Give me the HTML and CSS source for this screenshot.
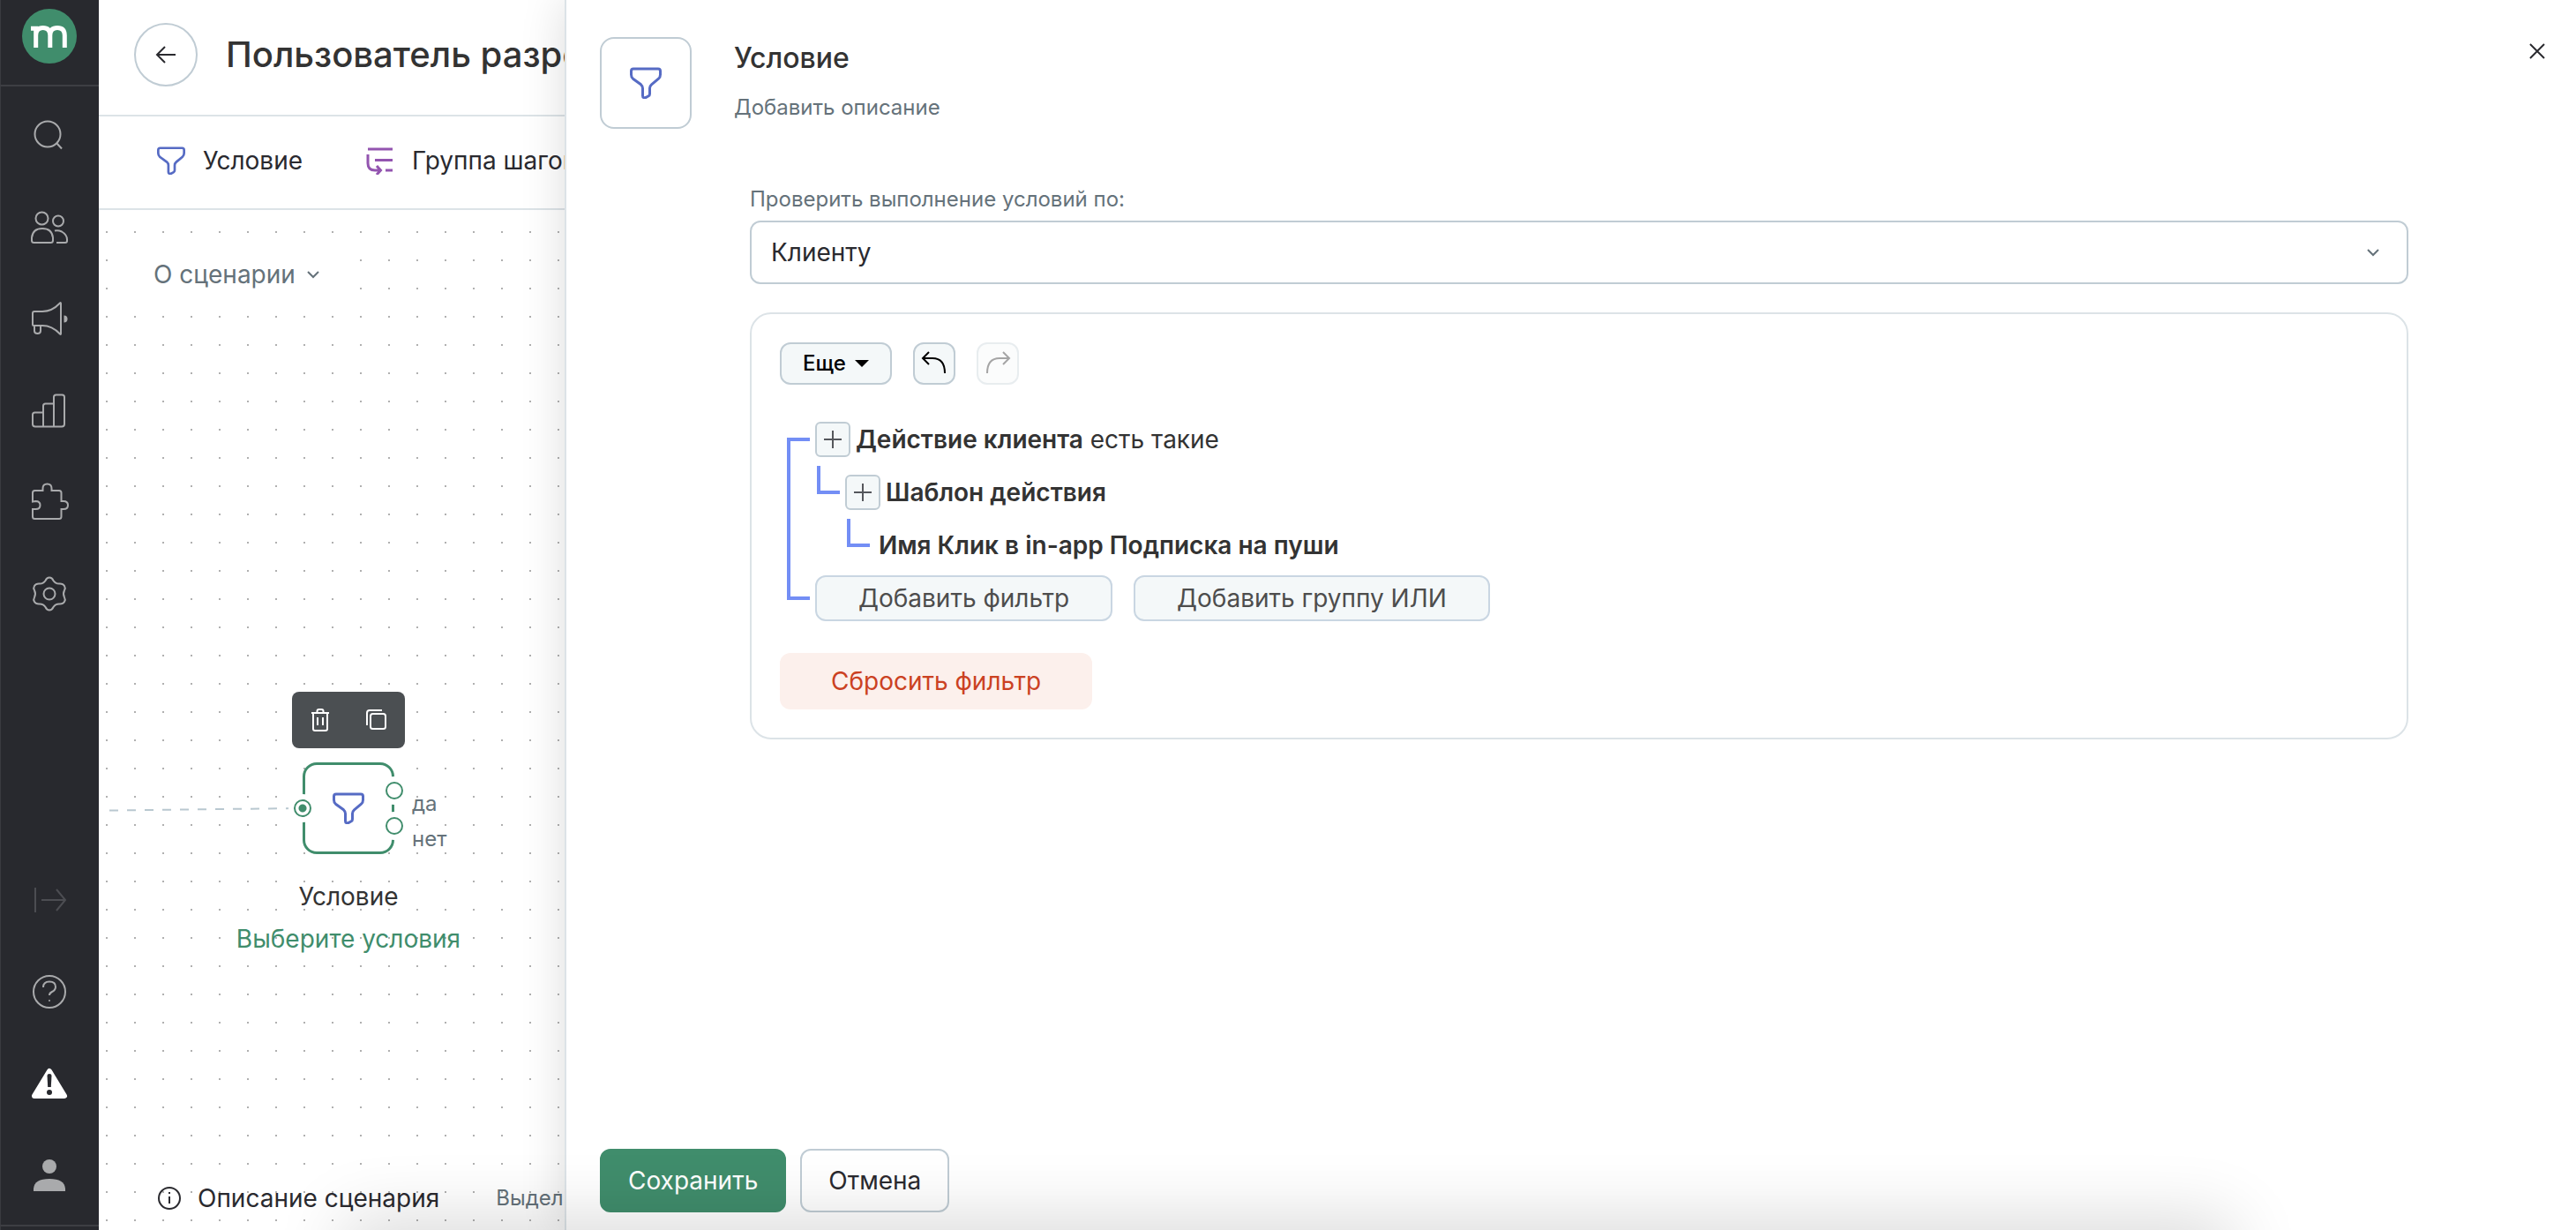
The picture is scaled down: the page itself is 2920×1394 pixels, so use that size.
FILE: index.html
```html
<!DOCTYPE html>
<html lang="ru">

<head>
    <meta charset="utf-8">
    <title>Условие</title>
    <link rel="stylesheet" href="styles.css">
</head>

<body>
    <!-- shared icon -->
    <svg class="sprite" aria-hidden="true">
        <symbol id="funnel" viewBox="0 0 36 36">
            <path d="M4 2H32Q34.500 2 34.500 4.500V8.500Q34.500 11.500 32.500 13.200L24.500 19.800Q22.500 21.500 22.500 24V30.500Q22.500 32 21.200 32.800L18 34.500Q14.500 35.500 14.500 32.500V24Q14.500 21.500 12.500 19.800L3.500 13.200Q1.500 11.500 1.500 8.500V4.500Q1.500 2 4 2Z" />
        </symbol>
    </svg>

    <nav class="sidebar">
        <a href="#" class="logo" aria-label="Главная">
            <svg width="62" height="62" viewBox="0 0 62 62">
                <circle cx="31" cy="31" r="31" fill="#408d6c" />
                <path d="M10 22.300h5.700V44M15.700 30q0-8.500 8-8.500t8.100 8.500v14M31.800 30q0-8.500 8.200-8.500t8.300 8.500v14" fill="none" stroke="#fff" stroke-width="5" />
            </svg>
        </a>
        <div class="nav-group">
            <a href="#" class="nav-item" aria-label="Поиск">
                <svg width="44" height="44" viewBox="0 0 44 44"><circle cx="20" cy="21" r="14.500" /><path d="M30 31l6 6.500" /></svg>
            </a>
            <a href="#" class="nav-item" aria-label="Клиенты">
                <svg width="44" height="44" viewBox="0 0 44 44"><circle cx="13.500" cy="12.500" r="7" /><circle cx="32" cy="15.500" r="6" /><path d="M4.500 40q-2.500 0-2.500-2.500v-3Q3 24 14 24t12 10.500v3q0 2.500-2.500 2.500zM28 26.500q4-1 8 1 6 3.500 6 9v1.500q0 2-2 2h-10" /></svg>
            </a>
            <a href="#" class="nav-item" aria-label="Кампании">
                <svg width="44" height="44" viewBox="0 0 44 44"><path d="M4 30q-1 0-1-1V16q0-2 2-2h9q11 0 20-9.500 1-1 1 .5v34q0 1.500-1 .500Q25 30 14 30zM5 30v6q0 3 3.500 3t3.500-3v-6" /><path d="M38.500 18.500q4 0 4 4t-4 4z" class="solid" /></svg>
            </a>
            <a href="#" class="nav-item" aria-label="Отчеты">
                <svg width="44" height="44" viewBox="0 0 44 44"><path d="M6 40.500q-3 0-3-3V27q0-2.500 2.500-2.500H15V17q0-2.500 2.500-2.500H27V7q0-2.500 2.500-2.500h7Q39 4.500 39 7v30.500q0 3-3 3zM15 24v16M27 14v26" /></svg>
            </a>
            <a href="#" class="nav-item" aria-label="Интеграции">
                <svg width="44" height="44" viewBox="0 0 44 44"><path d="M3 21.500V11.500q0-2.500 2.500-2.500H14.500V6.500q0-5 5-5t5 5V9H33q2.500 0 2.500 2.500v9.500h2.500q5 0 5 4.500t-5 4.500h-2.500v8.500q0 2.500-2.500 2.500H5.500Q3 41 3 38.500V30h3.500q5 0 5-4.500T6.500 21z" /></svg>
            </a>
            <a href="#" class="nav-item" aria-label="Настройки">
                <svg width="44" height="44" viewBox="0 0 44 44"><circle cx="22" cy="22" r="6.500" /><path d="M17.500 7Q19 3.500 22 3.500T26.500 7Q29 11 34 10.500 37.500 10.500 39 13T39 18Q37 22 39 26 40.500 28.500 39 31T34 33.500Q29 33 26.500 37 25 40.500 22 40.500T17.500 37Q15 33 10 33.500 6.500 33.500 5 31T5 26Q7 22 5 18 3.500 15.500 5 13T10 10.500Q15 11 17.500 7Z" /></svg>
            </a>
        </div>
        <div class="nav-group nav-bottom">
            <a href="#" class="nav-item dim" aria-label="Развернуть">
                <svg width="44" height="44" viewBox="0 0 44 44"><path d="M6 8v28M13 22h27M30 10l10 12-10 12" /></svg>
            </a>
            <a href="#" class="nav-item" aria-label="Помощь">
                <svg width="44" height="44" viewBox="0 0 44 44"><circle cx="22" cy="22" r="18" /><path d="M15 17q0-6.500 7-6.500t7 6q0 3.500-4 5.500-3 1.500-3 4" /><circle cx="22" cy="32" r="1" class="solid" /></svg>
            </a>
            <a href="#" class="nav-item" aria-label="Предупреждения">
                <svg width="44" height="44" viewBox="0 0 44 44"><path d="M22 8L39 36H5z" fill="#fff" stroke="#fff" stroke-width="6" stroke-linejoin="round" /><path d="M19.500 13q0-2 2.500-2t2.500 2l-.7 13h-3.600z" fill="#28292e" stroke="none" /><circle cx="22" cy="32" r="3" fill="#28292e" stroke="none" /></svg>
            </a>
            <a href="#" class="nav-item" aria-label="Профиль">
                <svg width="44" height="44" viewBox="0 0 44 44"><circle cx="22" cy="12" r="8" class="solid" /><path d="M4 40v-3Q5 26 22 26t18 11v3z" class="solid" /></svg>
            </a>
        </div>
    </nav>

    <main class="editor">
        <header class="editor-header">
            <button class="back" aria-label="Назад">
                <svg width="24" height="24" viewBox="0 0 24 24"><path d="M23 12H2M11 3L2 12l9 9" /></svg>
            </button>
            <h1>Пользователь разре</h1>
        </header>
        <div class="steps">
            <button class="step">
                <svg class="funnel" width="32" height="32"><use href="#funnel" /></svg>
                Условие
            </button>
            <button class="step">
                <svg class="group-icon" width="32" height="32" viewBox="0 0 32 32"><path d="M2 3h28M10 15.500h20M2 9v10q0 8 8 8h5M12 22l4.500 5-4.500 5M22 27h8" /></svg>
                Группа шагов
            </button>
        </div>

        <div class="canvas">
            <button class="about">
                О сценарии
                <svg width="16" height="16" viewBox="0 0 16 16"><path d="M2 5l6 6 6-6" /></svg>
            </button>

            <svg class="link" width="220" height="6" viewBox="0 0 220 6"><path d="M0 4.500L215 2" /></svg>

            <div class="node">
                <div class="node-tools">
                    <button aria-label="Удалить">
                        <svg width="28" height="28" viewBox="0 0 28 28"><path d="M4 6h20M6 6v18q0 2 2 2h12q2 0 2-2V6M10.500 6V4q0-2 2-2h3q2 0 2 2v2M11 11v9M17 11v9" /></svg>
                    </button>
                    <button aria-label="Копировать">
                        <svg width="28" height="28" viewBox="0 0 28 28"><path d="M3 20V6q0-3 3-3h14" /><rect x="7" y="7" width="17" height="17" rx="2.500" /></svg>
                    </button>
                </div>
                <div class="node-box">
                    <svg class="funnel" width="36" height="36"><use href="#funnel" /></svg>
                    <span class="port port-in"></span>
                    <span class="port port-yes"></span>
                    <span class="port port-no"></span>
                    <div class="port-labels"><span>да</span><span>нет</span></div>
                </div>
                <div class="node-name">Условие</div>
                <a href="#" class="node-hint">Выберите условия</a>
            </div>

            <footer class="canvas-footer">
                <button class="describe">
                    <svg width="28" height="28" viewBox="0 0 28 28"><circle cx="14" cy="14" r="12" /><path d="M14 12v8M14 7v2" /></svg>
                    Описание сценария
                </button>
                <span class="select-hint">Выдел</span>
            </footer>
        </div>
    </main>

    <section class="panel">
        <header class="panel-header">
            <div class="panel-icon">
                <svg class="funnel" width="36" height="36"><use href="#funnel" /></svg>
            </div>
            <div class="panel-title">
                <h2>Условие</h2>
                <a href="#">Добавить описание</a>
            </div>
            <button class="close" aria-label="Закрыть">
                <svg width="20" height="20" viewBox="0 0 20 20"><path d="M2 2l16 16M18 2L2 18" /></svg>
            </button>
        </header>

        <div class="panel-body">
            <label for="target">Проверить выполнение условий по:</label>
            <div class="select-wrap">
                <select id="target">
                    <option>Клиенту</option>
                </select>
                <svg width="16" height="16" viewBox="0 0 16 16"><path d="M2 5l6 6 6-6" /></svg>
            </div>

            <div class="filter-card">
                <div class="filter-bar">
                    <button class="tool more">Еще <span class="caret"></span></button>
                    <button class="tool" aria-label="Отменить">
                        <svg width="32" height="32" viewBox="0 0 32 32"><path d="M10 3L3 10l7 7M3 10h11q14 0 14 17" /></svg>
                    </button>
                    <button class="tool" aria-label="Повторить" disabled>
                        <svg width="32" height="32" viewBox="0 0 32 32"><path d="M22 3l7 7-7 7M29 10H18Q4 10 4 27" /></svg>
                    </button>
                </div>

                <div class="tree">
                    <div class="tree-row">
                        <button class="plus" aria-label="Добавить"><svg width="20" height="20" viewBox="0 0 20 20"><path d="M10 0v20M0 10h20" /></svg></button>
                        <span><b>Действие клиента</b> есть такие</span>
                    </div>
                    <div class="tree-row level-1">
                        <button class="plus" aria-label="Добавить"><svg width="20" height="20" viewBox="0 0 20 20"><path d="M10 0v20M0 10h20" /></svg></button>
                        <b>Шаблон действия</b>
                    </div>
                    <div class="tree-row level-2">
                        <b>Имя Клик в in-app Подписка на пуши</b>
                    </div>
                    <div class="tree-row tree-actions">
                        <button class="add">Добавить фильтр</button>
                        <button class="add">Добавить группу ИЛИ</button>
                    </div>
                </div>

                <button class="reset">Сбросить фильтр</button>
            </div>
        </div>

        <footer class="panel-footer">
            <button class="btn btn-primary">Сохранить</button>
            <button class="btn">Отмена</button>
        </footer>
    </section>
</body>

</html>
```
FILE: styles.css
```css
*,
*::before,
*::after {
    box-sizing: border-box;
}

body {
    margin: 0;
    height: 100vh;
    display: flex;
    overflow: hidden;
    font-family: Inter, sans-serif;
    font-size: 28px;
    line-height: 36px;
    color: #2a2a2f;
    background: #fff;
}

/* soft shade along the bottom edge of the window */
body::after {
    content: "";
    position: fixed;
    left: 400px;
    right: 400px;
    bottom: -60px;
    height: 60px;
    box-shadow: 0 0 80px 10px rgba(0, 0, 0, 0.16);
    pointer-events: none;
    z-index: 3;
}

button,
select {
    font: inherit;
    color: inherit;
    cursor: pointer;
}

button {
    background: none;
    border: none;
    padding: 0;
    display: flex;
    align-items: center;
    justify-content: center;
    white-space: nowrap;
}

a {
    text-decoration: none;
}

svg {
    display: block;
    flex: none;
    fill: none;
    stroke: currentColor;
    stroke-width: 2;
}

.sprite {
    position: absolute;
    width: 0;
    height: 0;
}

.funnel {
    color: #566bc4;
    stroke-width: 3;
}

/* sidebar */
.sidebar {
    flex: none;
    width: 112px;
    display: flex;
    flex-direction: column;
    background: #28292e;
    box-shadow: inset 1px 0 #3a3b40;
    position: relative;
    z-index: 4;
}

.logo {
    height: 98px;
    padding-top: 10px;
    display: flex;
    justify-content: center;
    border-bottom: 2px solid #3d3e43;
}

.logo svg {
    stroke: none;
}

.nav-group {
    padding-top: 3px;
}

.nav-bottom {
    margin-top: auto;
    padding: 0 0 4px;
    margin-bottom: 4px;
    border-bottom: 2px solid #3d3e43;
}

.nav-item {
    height: 104px;
    display: flex;
    align-items: center;
    justify-content: center;
    color: #a9aaac;
}

.nav-item.dim {
    color: #4c4d52;
}

.solid {
    fill: currentColor;
    stroke: none;
}

/* scenario editor */
.editor {
    flex: none;
    width: 528px;
    display: flex;
    flex-direction: column;
    overflow: hidden;
}

.editor-header {
    height: 132px;
    padding: 0 0 6px 40px;
    display: flex;
    align-items: center;
    gap: 32px;
    border-bottom: 2px solid #dce3e7;
}

.back {
    flex: none;
    width: 72px;
    height: 72px;
    border: 2px solid #c0ccd4;
    border-radius: 50%;
}

h1 {
    margin: 0;
    font-size: 40px;
    line-height: 48px;
    font-weight: 500;
    color: #333;
    white-space: nowrap;
}

.steps {
    height: 106px;
    padding: 0 0 4px 66px;
    display: flex;
    align-items: center;
    gap: 72px;
    border-bottom: 2px solid #dce3e7;
}

.step {
    gap: 20px;
}

.group-icon {
    color: #9355b0;
    stroke-width: 3;
}

.canvas {
    flex: 1;
    position: relative;
    display: flex;
    flex-direction: column;
    justify-content: space-between;
    align-items: flex-start;
    background: conic-gradient(from 270deg at 2px 2px, #b0b0b0 90deg, transparent 0) 8px 24px / 32px 32px;
}

.about {
    margin: 40px 0 0 32px;
    padding: 15px 30px;
    gap: 12px;
    color: #65727a;
    background: #fff;
}

.link {
    position: absolute;
    left: 12px;
    top: 676px;
    color: #b9c8d0;
    stroke-dasharray: 10 10;
}

.node {
    position: absolute;
    left: 123px;
    top: 546px;
    width: 320px;
    display: flex;
    flex-direction: column;
    align-items: center;
}

.node-tools {
    width: 128px;
    height: 64px;
    display: flex;
    justify-content: space-around;
    color: #fff;
    background: #4b4f52;
    border-radius: 8px;
}

.node-box {
    position: relative;
    width: 104px;
    height: 104px;
    margin: 16px 0 30px;
    display: flex;
    align-items: center;
    justify-content: center;
    background: #fff;
    border: 3px solid #408d6c;
    border-radius: 16px;
}

/* the white ring cuts a gap in the border around each port */
.port {
    position: absolute;
    width: 20px;
    height: 20px;
    border: 2px solid #408d6c;
    border-radius: 50%;
    background: #fff;
    box-shadow: 0 0 0 6px #fff;
}

.port-in {
    left: -13px;
    top: 39px;
    background: radial-gradient(circle, #408d6c 4px, #fff 5px);
}

.port-yes {
    right: -13px;
    top: 19px;
}

.port-no {
    right: -13px;
    top: 59px;
}

.port-labels {
    position: absolute;
    left: 121px;
    top: 24px;
    display: flex;
    flex-direction: column;
    font-size: 24px;
    line-height: 40px;
    color: #65727a;
}

.node-name {
    color: #333;
}

.node-hint {
    margin-top: 12px;
    color: #408d6c;
}

.canvas-footer {
    padding: 0 0 18px 66px;
    display: flex;
    align-items: center;
    gap: 64px;
}

.describe {
    gap: 18px;
}

.select-hint {
    font-size: 24px;
    color: #65727a;
    white-space: nowrap;
}

/* condition panel */
.panel {
    flex: 1;
    position: relative;
    z-index: 2;
    display: flex;
    flex-direction: column;
    background: #fff;
    border-left: 2px solid #dce3e7;
    box-shadow: 0 0 48px rgba(0, 0, 0, 0.14);
}

.panel-header {
    display: flex;
    padding: 42px 30px 0 38px;
}

.panel-icon {
    width: 104px;
    height: 104px;
    display: flex;
    align-items: center;
    justify-content: center;
    border: 2px solid #c0ccd4;
    border-radius: 16px;
}

.panel-title {
    margin-left: 48px;
}

h2 {
    margin: 4px 0 18px;
    font-size: 32px;
    line-height: 40px;
    font-weight: 500;
    color: #333;
}

.panel-title a {
    display: block;
    font-size: 24px;
    color: #65727a;
}

.close {
    margin-left: auto;
    width: 28px;
    height: 32px;
}

.panel-body {
    flex: 1;
    padding: 62px 190px 0 208px;
}

.panel-body label {
    display: block;
    margin-bottom: 6px;
    font-size: 24px;
    color: #65727a;
}

.select-wrap {
    position: relative;
}

.select-wrap select {
    width: 100%;
    height: 72px;
    padding: 0 22px;
    appearance: none;
    background: #fff;
    border: 2px solid #c0ccd4;
    border-radius: 12px;
}

.select-wrap svg {
    position: absolute;
    right: 32px;
    top: 28px;
    color: #65727a;
    pointer-events: none;
}

.filter-card {
    margin-top: 32px;
    padding: 32px;
    border: 2px solid #dce3e7;
    border-radius: 24px;
}

.filter-bar {
    display: flex;
    gap: 24px;
}

.tool {
    width: 48px;
    height: 48px;
    color: #000;
    background: #f4f8f9;
    border: 2px solid #c0ccd4;
    border-radius: 12px;
}

.tool:disabled {
    opacity: 0.35;
}

.more {
    width: auto;
    padding: 0 24px;
    gap: 10px;
    font-size: 24px;
    font-weight: 500;
}

.caret {
    border: 8px solid transparent;
    border-top-color: #000;
    border-bottom: none;
}

/* filter tree, the blue brackets join a row to its parent */
.tree {
    position: relative;
    margin-top: 32px;
    padding-left: 40px;
    color: #333;
}

.tree::before {
    content: "";
    position: absolute;
    left: 8px;
    top: 28px;
    bottom: 28px;
    width: 26px;
    border: 4px solid #738ef5;
    border-right: none;
}

.tree-row {
    position: relative;
    height: 60px;
    display: flex;
    align-items: center;
    gap: 6px;
}

.level-1 {
    margin-left: 34px;
}

.level-2 {
    margin-left: 72px;
}

.level-1::before,
.level-2::before {
    content: "";
    position: absolute;
    left: -32px;
    top: 0;
    width: 26px;
    height: 32px;
    border: 4px solid #738ef5;
    border-width: 0 0 4px 4px;
}

.level-2::before {
    left: -36px;
}

b {
    font-weight: 600;
}

.plus {
    width: 40px;
    height: 40px;
    color: #55575c;
    background: #f4f8f9;
    border: 2px solid #c0ccd4;
    border-radius: 6px;
}

.tree-actions {
    gap: 24px;
}

.add {
    height: 52px;
    padding: 0 47px;
    color: #4d4d4d;
    background: #f4f8f9;
    border: 2px solid #c9d6e2;
    border-radius: 12px;
}

.reset {
    height: 64px;
    margin-top: 32px;
    padding: 0 58px;
    color: #cb4122;
    background: #fcf0ec;
    border-radius: 12px;
}

.panel-footer {
    padding: 0 38px 20px;
    display: flex;
    gap: 16px;
}

.btn {
    height: 72px;
    padding: 0 30px;
    border: 2px solid #c0ccd4;
    border-radius: 12px;
}

.btn-primary {
    color: #fff;
    background: #408d6c;
    border-color: #408d6c;
}
```
